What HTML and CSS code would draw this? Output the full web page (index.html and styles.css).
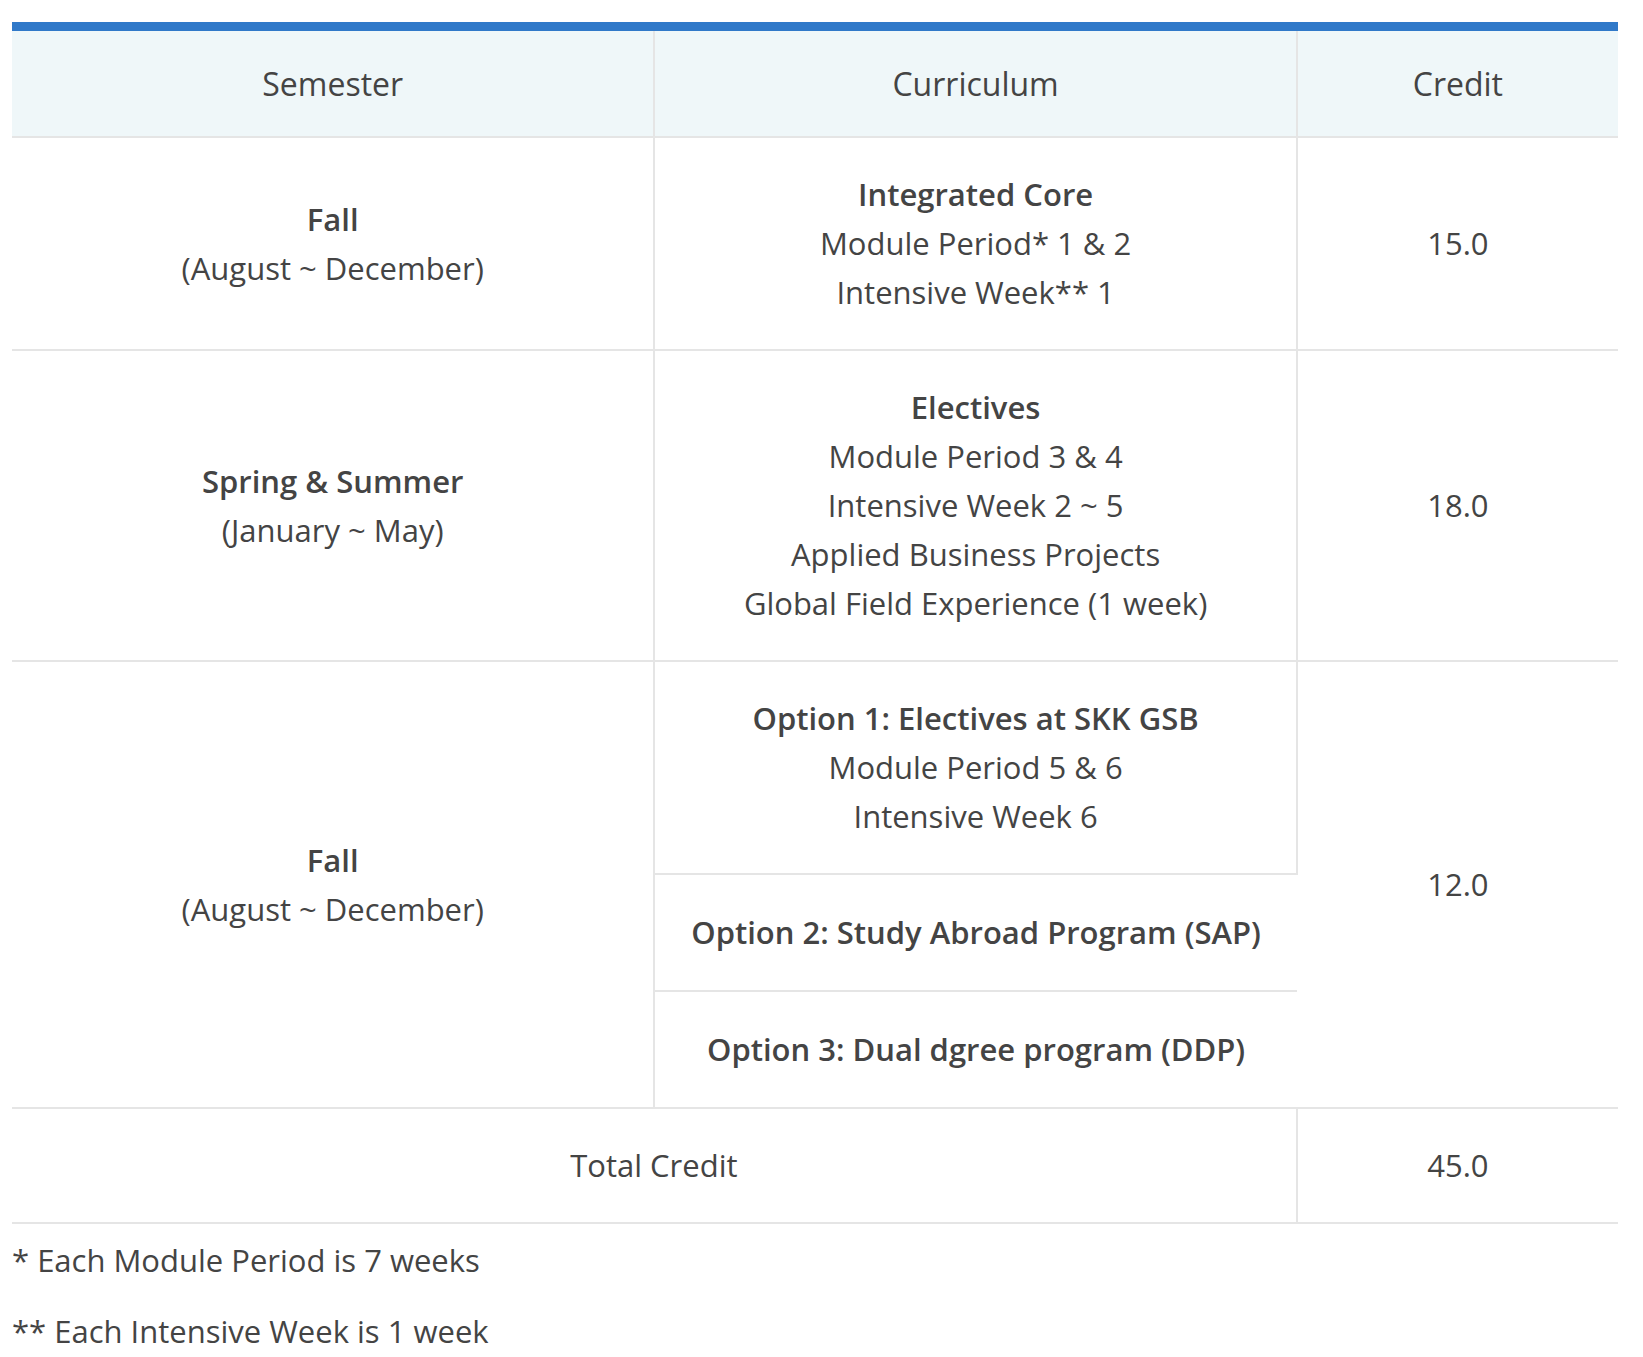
FILE: index.html
```html
<!DOCTYPE html>
<html lang="en">
<head>
<meta charset="utf-8">
<title>Curriculum</title>
<link rel="stylesheet" href="styles.css">
</head>
<body>
<div class="page">
  <table class="curriculum">
    <colgroup>
      <col class="col-sem">
      <col class="col-cur">
      <col class="col-cred">
    </colgroup>
    <thead>
      <tr>
        <th class="first">Semester</th>
        <th>Curriculum</th>
        <th>Credit</th>
      </tr>
    </thead>
    <tbody>
      <tr>
        <td class="first"><strong>Fall</strong><br>(August ~ December)</td>
        <td><strong>Integrated Core</strong><br>Module Period* 1 &amp; 2<br>Intensive Week** 1</td>
        <td>15.0</td>
      </tr>
      <tr>
        <td class="first"><strong>Spring &amp; Summer</strong><br>(January ~ May)</td>
        <td><strong>Electives</strong><br>Module Period 3 &amp; 4<br>Intensive Week 2 ~ 5<br>Applied Business Projects<br>Global Field Experience (1 week)</td>
        <td>18.0</td>
      </tr>
      <tr>
        <td class="first" rowspan="3"><strong>Fall</strong><br>(August ~ December)</td>
        <td class="opt1"><strong>Option 1: Electives at SKK GSB</strong><br>Module Period 5 &amp; 6<br>Intensive Week 6</td>
        <td class="span-credit" rowspan="3">12.0</td>
      </tr>
      <tr>
        <td class="opt"><strong>Option 2: Study Abroad Program (SAP)</strong></td>
      </tr>
      <tr>
        <td class="opt"><strong>Option 3: Dual dgree program (DDP)</strong></td>
      </tr>
      <tr>
        <td class="first" colspan="2">Total Credit</td>
        <td>45.0</td>
      </tr>
    </tbody>
  </table>
  <div class="notes">
    <p>* Each Module Period is 7 weeks</p>
    <p>** Each Intensive Week is 1 week</p>
  </div>
</div>
</body>
</html>
```

FILE: styles.css
```css
html, body {
  margin: 0;
  padding: 0;
  background: #ffffff;
}

body {
  font-family: "Open Sans", "Noto Sans", sans-serif;
  color: #444444;
  font-size: 31px;
  line-height: 49px;
}

.page {
  padding: 22px 25px 0 12px;
}

.curriculum {
  width: 100%;
  border-collapse: collapse;
  border-top: 9px solid #3079c9;
  table-layout: fixed;
}

.col-sem { width: 40%; }
.col-cur { width: 40%; }
.col-cred { width: 20%; }

.curriculum th {
  font-weight: 400;
  font-size: 32px;
  line-height: 48px;
  background: #eff7f9;
  padding: 29px 0 28px;
  border-left: 2px solid #e5e5e5;
  border-bottom: 2px solid #e5e5e5;
  text-align: center;
}

.curriculum td {
  text-align: center;
  vertical-align: middle;
  padding: 32px 0;
  border-left: 2px solid #e5e5e5;
  border-bottom: 2px solid #e5e5e5;
}

.curriculum th.first,
.curriculum td.first {
  border-left: none;
}

.curriculum strong {
  font-weight: 600;
}

.curriculum td.opt1 {
  border-right: 2px solid #e5e5e5;
}

.curriculum td.opt {
  border-right: none;
  padding: 33px 0;
}

.curriculum td.span-credit {
  border-left: none;
}

.notes {
  padding-top: 12px;
}

.notes p {
  margin: 0 0 22px;
}
```
